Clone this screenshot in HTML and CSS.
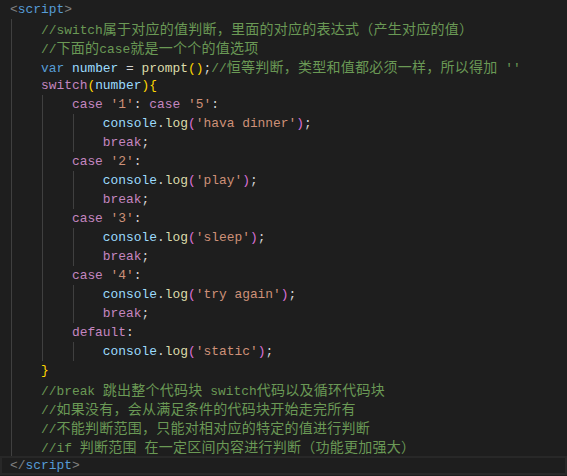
FILE: index.html
```html
<!DOCTYPE html>
<html>
<head>
<meta charset="utf-8">
<link rel="stylesheet" href="styles.css">
</head>
<body>
<div class="editor">
<div class="ln"><span class="t">&lt;</span><span class="tn">script</span><span class="t">&gt;</span></div>
<div class="ln"><span class="in"></span><span class="c">//switch<span class="cj">属于对应的值判断，里面的对应的表达式（产生对应的值）</span></span></div>
<div class="ln"><span class="in"></span><span class="c">//<span class="cj">下面的</span>case<span class="cj">就是一个个的值选项</span></span></div>
<div class="ln"><span class="in"></span><span class="k">var</span> <span class="v">number</span> = <span class="f">prompt</span><span class="b1">()</span>;<span class="c">//<span class="cj">恒等判断，类型和值都必须一样，所以得加</span> ''</span></div>
<div class="ln"><span class="in"></span><span class="ctl">switch</span><span class="b1">(</span><span class="v">number</span><span class="b1">){</span></div>
<div class="ln"><span class="in"></span><span class="in"></span><span class="ctl">case</span> <span class="s">'1'</span>: <span class="ctl">case</span> <span class="s">'5'</span>:</div>
<div class="ln"><span class="in"></span><span class="in"></span><span class="in"></span><span class="v">console</span>.<span class="f">log</span><span class="b2">(</span><span class="s">'hava dinner'</span><span class="b2">)</span>;</div>
<div class="ln"><span class="in"></span><span class="in"></span><span class="in"></span><span class="ctl">break</span>;</div>
<div class="ln"><span class="in"></span><span class="in"></span><span class="ctl">case</span> <span class="s">'2'</span>:</div>
<div class="ln"><span class="in"></span><span class="in"></span><span class="in"></span><span class="v">console</span>.<span class="f">log</span><span class="b2">(</span><span class="s">'play'</span><span class="b2">)</span>;</div>
<div class="ln"><span class="in"></span><span class="in"></span><span class="in"></span><span class="ctl">break</span>;</div>
<div class="ln"><span class="in"></span><span class="in"></span><span class="ctl">case</span> <span class="s">'3'</span>:</div>
<div class="ln"><span class="in"></span><span class="in"></span><span class="in"></span><span class="v">console</span>.<span class="f">log</span><span class="b2">(</span><span class="s">'sleep'</span><span class="b2">)</span>;</div>
<div class="ln"><span class="in"></span><span class="in"></span><span class="in"></span><span class="ctl">break</span>;</div>
<div class="ln"><span class="in"></span><span class="in"></span><span class="ctl">case</span> <span class="s">'4'</span>:</div>
<div class="ln"><span class="in"></span><span class="in"></span><span class="in"></span><span class="v">console</span>.<span class="f">log</span><span class="b2">(</span><span class="s">'try again'</span><span class="b2">)</span>;</div>
<div class="ln"><span class="in"></span><span class="in"></span><span class="in"></span><span class="ctl">break</span>;</div>
<div class="ln"><span class="in"></span><span class="in"></span><span class="ctl">default</span>:</div>
<div class="ln"><span class="in"></span><span class="in"></span><span class="in"></span><span class="v">console</span>.<span class="f">log</span><span class="b2">(</span><span class="s">'static'</span><span class="b2">)</span>;</div>
<div class="ln"><span class="in"></span><span class="b1">}</span></div>
<div class="ln"><span class="in"></span><span class="c">//break <span class="cj">跳出整个代码块</span> switch<span class="cj">代码以及循环代码块</span></span></div>
<div class="ln"><span class="in"></span><span class="c">//<span class="cj">如果没有，会从满足条件的代码块开始走完所有</span></span></div>
<div class="ln"><span class="in"></span><span class="c">//<span class="cj">不能判断范围，只能对相对应的特定的值进行判断</span></span></div>
<div class="ln"><span class="in"></span><span class="c">//if <span class="cj">判断范围</span> <span class="cj">在一定区间内容进行判断（功能更加强大）</span></span></div>
<div class="ln cur"><span class="t">&lt;/</span><span class="tn">script</span><span class="t">&gt;</span></div>
</div>
</body>
</html>
```

FILE: styles.css
```css
html, body {
  margin: 0;
  padding: 0;
  background: #1e1e1e;
}
body {
  width: 567px;
  height: 476px;
  overflow: hidden;
}
.editor {
  font-family: "Liberation Mono", "Noto Sans CJK SC", monospace;
  font-size: 12.9px;
  color: #d4d4d4;
}
.ln {
  height: 19px;
  line-height: 19px;
  white-space: pre;
  padding-left: 10px;
}
.cur {
  box-shadow: inset 0 0 0 2px #282828;
}
.in {
  display: inline-block;
  width: 30.96px;
  height: 19px;
  vertical-align: top;
  background: linear-gradient(to right, transparent 1px, #404040 1px, #404040 2px, transparent 2px);
}
.cj {
  font-family: "Noto Sans CJK SC", sans-serif;
  font-size: 14px;
  letter-spacing: 0.25px;
}
.t { color: #808080; }
.tn { color: #569cd6; }
.c { color: #6a9955; }
.k { color: #569cd6; }
.v { color: #9cdcfe; }
.f { color: #dcdcaa; }
.ctl { color: #c586c0; }
.s { color: #ce9178; }
.b1 { color: #ffd700; }
.b2 { color: #da70d6; }
```
